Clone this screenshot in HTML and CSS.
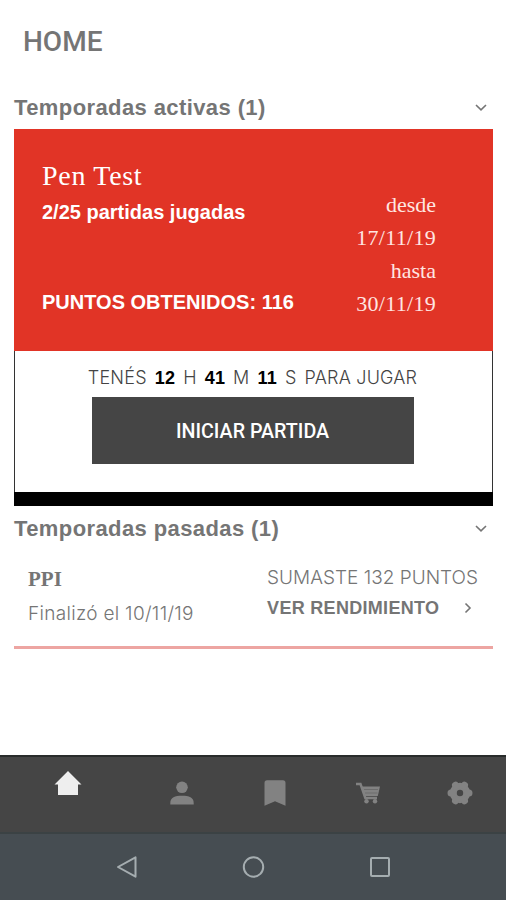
FILE: index.html
```
<!DOCTYPE html>
<html lang="es">
<head>
    <meta charset="UTF-8">
    <meta name="viewport" content="width=device-width, initial-scale=1.0">
    <title>Home</title>
    <link rel="stylesheet" href="styles.css">
</head>
<body>
    <header class="header">
        <h1>HOME</h1>
    </header>

    <main>
        <section>
            <div class="section-title">
                <h2>Temporadas activas (1)</h2>
                <svg class="chevron" width="14" height="8" viewBox="0 0 14 8"><path d="M2 1l5 4.9 5-4.9"/></svg>
            </div>
            <div class="card">
                <div class="card-top">
                    <div class="card-info">
                        <h3>Pen Test</h3>
                        <p class="played">2/25 partidas jugadas</p>
                        <p class="points">PUNTOS OBTENIDOS: 116</p>
                    </div>
                    <div class="dates">
                        <span>desde</span>
                        <span class="date">17/11/19</span>
                        <span>hasta</span>
                        <span class="date">30/11/19</span>
                    </div>
                </div>
                <div class="card-bottom">
                    <p class="countdown"><span>TENÉS</span><b>12</b><span>H</span><b>41</b><span>M</span><b>11</b><span>S</span><span>PARA JUGAR</span></p>
                    <button class="start-button">INICIAR PARTIDA</button>
                </div>
            </div>
        </section>

        <section>
            <div class="section-title past">
                <h2>Temporadas pasadas (1)</h2>
                <svg class="chevron" width="14" height="8" viewBox="0 0 14 8"><path d="M2 1l5 4.9 5-4.9"/></svg>
            </div>
            <div class="past-season">
                <div class="past-info">
                    <h4>PPI</h4>
                    <p>Finalizó el 10/11/19</p>
                </div>
                <div class="past-result">
                    <p class="sum">SUMASTE 132 PUNTOS</p>
                    <a class="results-link"><span>VER RENDIMIENTO</span>
                        <svg class="chevron" width="8" height="12" viewBox="0 0 8 12"><path d="M1.5 1.5L6 6l-4.5 4.5"/></svg>
                    </a>
                </div>
            </div>
        </section>
    </main>

    <nav class="tabs">
        <svg class="tab home" width="28" height="26" viewBox="0 0 28 26"><path d="M14 1L.5 14.5H4V25h20V14.5h3.5z"/></svg>
        <svg class="tab" width="24" height="24" viewBox="0 0 24 24"><circle cx="12" cy="6.3" r="5.8"/><path d="M.3 23.5V22C.3 16.500 5 14.8 12 14.8s11.7 1.7 11.7 7.2v1.5z"/></svg>
        <svg class="tab" width="22" height="26" viewBox="0 0 22 26"><path d="M.5 25.8V3Q.5.3 3 .3h16Q21.5.3 21.5 3v22.800L11 21.3z"/></svg>
        <svg class="tab" width="26" height="22" viewBox="0 0 26 22">
            <path class="cart-handle" d="M1 2h4.500l4.800 14H22"/>
            <path d="M6.500 4.500H25L22.800 14H9.500z"/>
            <path class="cart-lines" d="M9 7.500h14M10 11h12.500"/>
            <circle cx="11.5" cy="19.2" r="2.2"/><circle cx="20" cy="19.2" r="2.2"/>
        </svg>
        <svg class="tab" width="26" height="26" viewBox="-13 -13 26 26">
            <circle class="gear-ring" r="6.7"/>
            <g class="gear-teeth">
                <path d="M8 0h1M-8 0h-1"/>
                <path transform="rotate(60)" d="M8 0h1M-8 0h-1"/>
                <path transform="rotate(120)" d="M8 0h1M-8 0h-1"/>
            </g>
        </svg>
    </nav>

    <footer class="system-bar">
        <svg width="24" height="24" viewBox="0 0 24 24"><path d="M20.500 2.300v19.400L3 12z"/></svg>
        <svg width="24" height="24" viewBox="0 0 24 24"><circle cx="12.5" cy="12" r="9.7"/></svg>
        <svg width="24" height="24" viewBox="0 0 24 24"><rect x="4" y="3" width="18" height="18" rx="1"/></svg>
    </footer>
</body>
</html>
```
FILE: styles.css
```
* {
    box-sizing: border-box;
}

body {
    margin: 0;
    height: 900px;
    display: flex;
    flex-direction: column;
    background: #ffffff;
    color: #757575;
    font-family: "Liberation Sans", Arial, sans-serif;
    overflow: hidden;
}

h1, h2, h3, h4, p {
    margin: 0;
    white-space: nowrap;
}

.header {
    height: 86px;
    padding: 22px 23px 0;
}

h1 {
    font-family: Roboto, sans-serif;
    font-size: 28px;
    font-weight: 500;
    line-height: 40px;
}

main {
    flex: 1;
    padding: 0 13px 0 14px;
}

.section-title {
    height: 43px;
    display: flex;
    align-items: center;
    justify-content: space-between;
    padding-right: 5px;
}

.section-title.past {
    height: 46px;
}

h2 {
    font-size: 22px;
    line-height: 28px;
    letter-spacing: 0.4px;
}

.chevron {
    fill: none;
    stroke: #757575;
    stroke-width: 1.6;
}

/* Active season */
.card {
    border-bottom: 14px solid #000000;
}

.card-top {
    height: 222px;
    display: flex;
    justify-content: space-between;
    padding: 30px 57px 0 28px;
    background: #e13426;
    color: #ffffff;
}

h3 {
    font-family: "Liberation Serif", serif;
    font-size: 28px;
    font-weight: 400;
    line-height: 34px;
    letter-spacing: 0.7px;
}

.played,
.points {
    font-size: 20px;
    font-weight: bold;
    line-height: 24px;
}

.played {
    margin-top: 7px;
}

.points {
    margin-top: 66px;
}

.dates {
    display: flex;
    flex-direction: column;
    align-items: flex-end;
    padding-top: 29px;
    font-family: "Liberation Serif", serif;
    font-size: 22px;
    line-height: 33px;
    color: #ffe6e2;
}

.date {
    letter-spacing: 0.3px;
}

.card-bottom {
    height: 141px;
    display: flex;
    flex-direction: column;
    align-items: center;
    padding: 15px 2px 0 0;
    border: 1px solid #333333;
    border-width: 0 1px;
}

.countdown {
    display: flex;
    gap: 8px;
    font-family: Inter, sans-serif;
    font-size: 18px;
    font-weight: 300;
    line-height: 24px;
    letter-spacing: 0.2px;
    color: #444444;
}

.countdown b {
    font-family: "Liberation Sans", Arial, sans-serif;
    font-weight: bold;
    color: #000000;
}

.start-button {
    width: 322px;
    height: 67px;
    margin-top: 7px;
    padding: 2px 0 0;
    border: 0;
    background: #454545;
    color: #ffffff;
    font-family: Roboto, sans-serif;
    font-size: 19.7px;
    font-weight: 500;
}

/* Past season */
.past-season {
    height: 97px;
    display: flex;
    justify-content: space-between;
    padding: 13px 15px 0 14px;
    border-bottom: 3px solid #eda5a2;
}

h4 {
    font-family: "Liberation Serif", serif;
    font-size: 21px;
    line-height: 28px;
}

.past-info p,
.sum {
    font-family: Inter, sans-serif;
    font-weight: 300;
    font-size: 19px;
    line-height: 24px;
}

.sum {
    padding-top: 1px;
}

.past-info p {
    margin-top: 9px;
    letter-spacing: 0.3px;
}

.results-link {
    display: flex;
    align-items: center;
    gap: 25px;
    margin-top: 6px;
    font-size: 18px;
    font-weight: bold;
    line-height: 24px;
    letter-spacing: 0.3px;
}

/* Bottom navigation */
.tabs {
    height: 79px;
    display: grid;
    grid-template-columns: 136px 92px 94px 92px 92px;
    align-items: center;
    justify-items: center;
    padding-bottom: 3px;
    border-top: 2px solid #292c2b;
    border-bottom: 2px solid #3b4244;
    background: #454545;
}

.tab {
    fill: #828282;
}

.home {
    margin-bottom: 21px;
    fill: #eeeeee;
}

.cart-handle {
    fill: none;
    stroke: #828282;
    stroke-width: 2.4;
}

.cart-lines {
    stroke: #6c6c6c;
    stroke-width: 1;
}

.gear-ring {
    fill: none;
    stroke: #828282;
    stroke-width: 7px;
}

.gear-teeth {
    stroke: #828282;
    stroke-width: 7px;
    stroke-linecap: round;
}

.system-bar {
    height: 66px;
    display: grid;
    grid-template-columns: repeat(3, 126px);
    align-items: center;
    justify-content: center;
    justify-items: center;
    background: #464d52;
}

.system-bar svg {
    fill: none;
    stroke: #a5adb0;
    stroke-width: 2;
    stroke-linejoin: round;
}
```
